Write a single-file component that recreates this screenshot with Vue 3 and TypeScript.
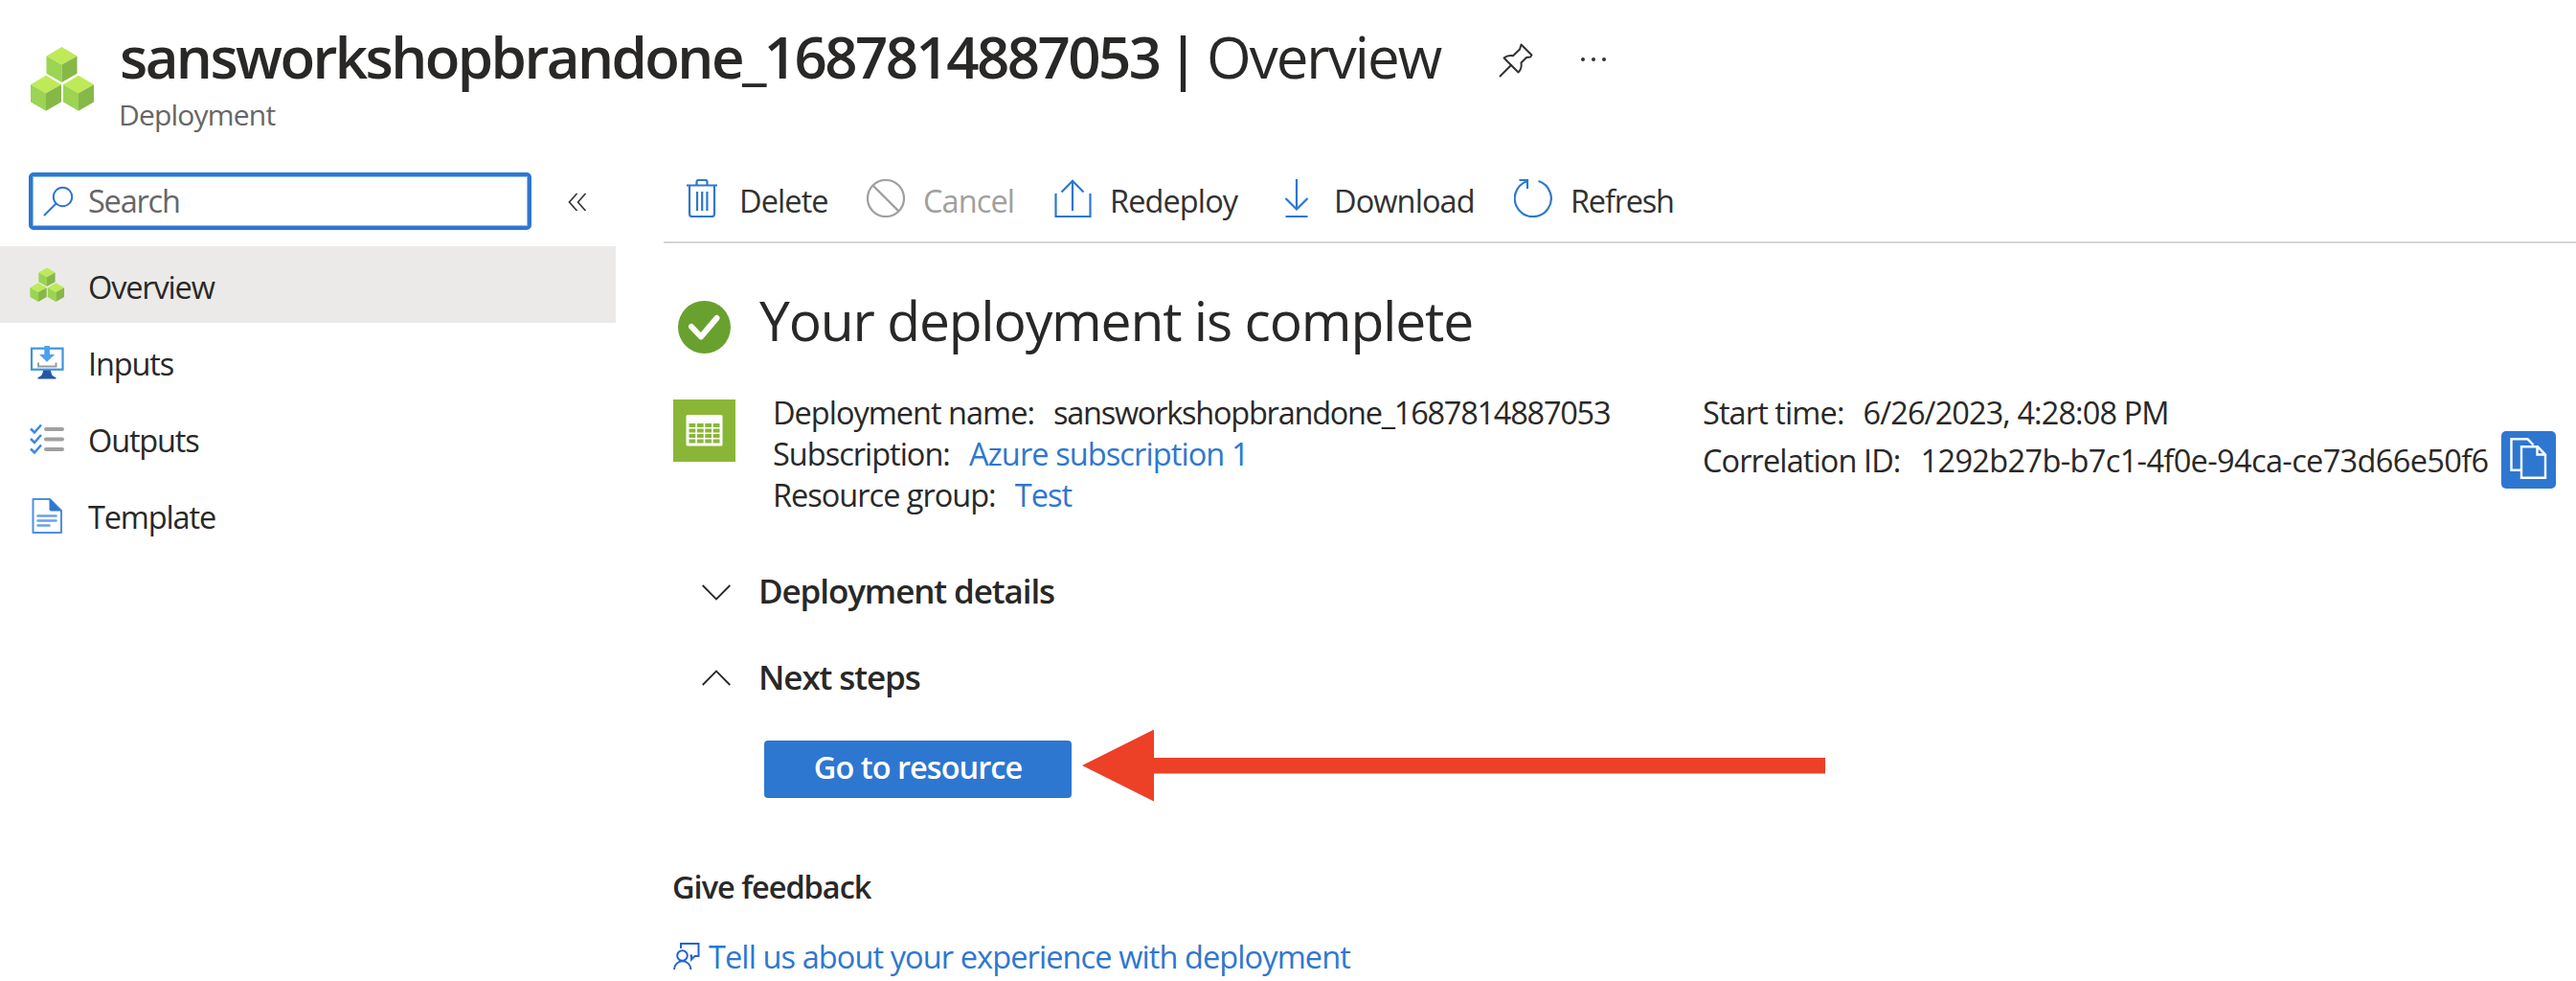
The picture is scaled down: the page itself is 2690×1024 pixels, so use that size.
<script setup lang="ts">
type CommandIcon = 'delete' | 'cancel' | 'redeploy' | 'download' | 'refresh'
type MenuIcon = 'cubes' | 'inputs' | 'outputs' | 'template'

interface Command {
  label: string
  icon: CommandIcon
  disabled?: boolean
}

interface MenuItem {
  label: string
  icon: MenuIcon
  active?: boolean
}

const deploymentName = 'sansworkshopbrandone_1687814887053'

const menu: MenuItem[] = [
  { label: 'Overview', icon: 'cubes', active: true },
  { label: 'Inputs', icon: 'inputs' },
  { label: 'Outputs', icon: 'outputs' },
  { label: 'Template', icon: 'template' },
]

const commands: Command[] = [
  { label: 'Delete', icon: 'delete' },
  { label: 'Cancel', icon: 'cancel', disabled: true },
  { label: 'Redeploy', icon: 'redeploy' },
  { label: 'Download', icon: 'download' },
  { label: 'Refresh', icon: 'refresh' },
]

/* Offsets of the three stacked cubes */
const cubes = [
  { x: 16.5, y: 0 },
  { x: 0, y: 29.8 },
  { x: 34, y: 29.8 },
]
</script>

<template>
  <div class="page">
    <header class="header">
      <svg class="header-icon" viewBox="0 0 66 67">
        <g v-for="(c, i) in cubes" :key="i" :transform="`translate(${c.x} ${c.y})`">
          <path d="M16 0 32 9.400 16 18.500 0 9.400Z" fill="#bfea58" />
          <path d="M0 9.400 16 18.500V37L0 27.800Z" fill="#9bd453" />
          <path d="M32 9.400 16 18.500V37L32 27.800Z" fill="#86b848" />
        </g>
      </svg>
      <div class="heading">
        <div class="title-row">
          <h1><b>{{ deploymentName }}</b><i class="pipe">|</i><span>Overview</span></h1>
          <svg class="pin" viewBox="0 0 36 36" fill="none" stroke="#323130" stroke-width="2" stroke-linejoin="round">
            <path d="M23.500 1.500 34.500 12.500 33 14.500 29 15 23.500 20.500C24.300 24.500 23.500 27.500 20.500 30.500L5.500 15.500C8.500 13 11.500 12.700 15 13.300L22 6.500Z" />
            <path d="M13 23 1.500 34.500" stroke-linecap="round" />
          </svg>
          <svg class="dots" viewBox="0 0 28 6" fill="#323130">
            <circle cx="3" cy="3" r="2" /><circle cx="14" cy="3" r="2" /><circle cx="25" cy="3" r="2" />
          </svg>
        </div>
        <p class="subtitle">Deployment</p>
      </div>
    </header>

    <div class="body">
      <aside class="sidebar">
        <div class="search-row">
          <div class="search">
            <svg viewBox="0 0 32 32" fill="none" stroke="#2e77d0" stroke-width="2">
              <circle cx="20.500" cy="11.500" r="9.700" />
              <path d="M13.500 18.500 1.500 30.500" stroke-linecap="round" />
            </svg>
            <span>Search</span>
          </div>
          <svg class="collapse" viewBox="0 0 20 20" fill="none" stroke="#323130" stroke-width="1.600">
            <path d="M9.500 1 1.500 10 9.500 19M18.500 1 10.500 10 18.500 19" />
          </svg>
        </div>
        <nav>
          <a v-for="item in menu" :key="item.label" class="nav-item" :class="{ active: item.active }">
            <svg v-if="item.icon === 'cubes'" viewBox="0 0 40 40">
              <g transform="translate(2.400 2.500) scale(.54 .53)">
                <g v-for="(c, i) in cubes" :key="i" :transform="`translate(${c.x} ${c.y})`">
                  <path d="M16 0 32 9.400 16 18.500 0 9.400Z" fill="#bfea58" />
                  <path d="M0 9.400 16 18.500V37L0 27.800Z" fill="#9bd453" />
                  <path d="M32 9.400 16 18.500V37L32 27.800Z" fill="#86b848" />
                </g>
              </g>
            </svg>
            <svg v-else-if="item.icon === 'inputs'" viewBox="0 0 40 40">
              <path d="M16 28h8c0 6 2 8 5.500 9v1.500h-19V37c3.500-1 5.500-3 5.500-9Z" fill="#2457a5" />
              <rect x="4" y="6.700" width="32.500" height="22" fill="#fff" stroke="#3f93db" stroke-width="2.200" />
              <path d="M11 21.500v4h18.500v-4" fill="none" stroke="#9c9c9c" stroke-width="2" />
              <path d="M17.300 4h5.600v9h5.300L20 20.800 12 13h5.300Z" fill="#4da0ec" />
            </svg>
            <svg v-else-if="item.icon === 'outputs'" viewBox="0 0 40 40" fill="none" stroke-linecap="round">
              <path d="M19 11h17M19 21.500h17M19 32h17" stroke="#a0a0a0" stroke-width="4" />
              <path d="M3 10.500 7 14.500 14 6.500M3 21 7 25 14 17M3 31.500 7 35.500 14 27.500" stroke="#3e86e0" stroke-width="2.500" stroke-linecap="butt" />
            </svg>
            <svg v-else viewBox="0 0 40 40">
              <path d="M5.500 4H23L35 16V39H5.500Z" fill="#fff" stroke="#4d8fe3" stroke-width="2" stroke-linejoin="round" />
              <path d="M22.500 3.500 35.500 16.500H24.500a2 2 0 0 1-2-2Z" fill="#2e77d0" />
              <path d="M10.500 21.500h19M10.500 26.500h19M10.500 31.500h12" stroke="#6ba0ea" stroke-width="2.600" stroke-linecap="round" />
            </svg>
            <span>{{ item.label }}</span>
          </a>
        </nav>
      </aside>

      <main class="main">
        <div class="toolbar">
          <button v-for="cmd in commands" :key="cmd.label" class="command" :class="[cmd.icon, { disabled: cmd.disabled }]">
            <svg v-if="cmd.icon === 'delete'" viewBox="0 0 40 40">
              <path d="M7 7V36.500a2.500 2.500 0 0 0 2.500 2.500H30.500a2.500 2.500 0 0 0 2.500-2.500V7" />
              <path d="M4 6.500H36M14.500 6V3a2 2 0 0 1 2-2h7a2 2 0 0 1 2 2V6M15 13V33M20.200 13V33M25.400 13V33" />
            </svg>
            <svg v-else-if="cmd.icon === 'cancel'" viewBox="0 0 40 40">
              <circle cx="20" cy="20" r="19" /><path d="M6.600 6.600 33.400 33.400" />
            </svg>
            <svg v-else-if="cmd.icon === 'redeploy'" viewBox="0 0 40 40">
              <path d="M2.500 15V39H38.500V15M20 33V1.500M8.500 13.500 20 1.800 31.500 13.500" />
            </svg>
            <svg v-else-if="cmd.icon === 'download'" viewBox="0 0 40 40">
              <path d="M20 0V31.500M8.500 20 20 31.500 31.500 20M8.500 39H31.500" />
            </svg>
            <svg v-else viewBox="0 0 40 40">
              <path d="M25.500 2A19 19 0 1 1 13.500 2.200M5.500 1H14V10" />
            </svg>
            <span>{{ cmd.label }}</span>
          </button>
        </div>

        <section class="status">
          <svg viewBox="0 0 55 55">
            <circle cx="27.500" cy="27.500" r="27.500" fill="#69a12f" />
            <path d="M14 27 24 37.500 40.500 18" fill="none" stroke="#fff" stroke-width="6" stroke-linecap="round" stroke-linejoin="round" />
          </svg>
          <h2>Your deployment is complete</h2>
        </section>

        <section class="essentials">
          <svg class="tile" viewBox="0 0 65 65">
            <rect width="65" height="65" fill="#8ab637" />
            <rect x="13.500" y="16" width="38" height="32.500" rx="1.500" fill="#fff" />
            <g stroke="#8ab637" stroke-width="4" stroke-dasharray="6.800 1.600">
              <path d="M16.500 27H48.500M16.500 32.500H48.500M16.500 38H48.500M16.500 43.500H48.500" />
            </g>
          </svg>
          <div class="col names">
            <div><span>Deployment name:</span><span class="dense">{{ deploymentName }}</span></div>
            <div><span>Subscription:</span><a>Azure subscription 1</a></div>
            <div><span>Resource group:</span><a>Test</a></div>
          </div>
          <div class="col">
            <div><span>Start time:</span><span>6/26/2023, 4:28:08 PM</span></div>
            <div class="correlation">
              <span>Correlation ID:</span><span class="guid">1292b27b-b7c1-4f0e-94ca-ce73d66e50f6</span>
              <button class="copy">
                <svg viewBox="0 0 57 60" fill="none" stroke="#fff" stroke-width="2.400">
                  <path d="M20 40.800H10.500V8.300H27.500L33.500 14.500" />
                  <path d="M21 16.300H38L46 24.500V48.800H21ZM37.500 16.500V24.500H46" />
                </svg>
              </button>
            </div>
          </div>
        </section>

        <h3 class="details">
          <svg viewBox="0 0 30 18"><path d="M.700 2 15 16.500 29.300 2" /></svg><span>Deployment details</span>
        </h3>
        <h3 class="next">
          <svg viewBox="0 0 30 18"><path d="M.700 17 15 2.500 29.300 17" /></svg><span>Next steps</span>
        </h3>

        <div class="action">
          <button class="primary">Go to resource</button>
          <svg class="arrow" viewBox="0 0 776 76">
            <path d="M0 38 75 .500V30H776V46.500H75V75.500Z" fill="#ec4027" />
          </svg>
        </div>

        <h4>Give feedback</h4>
        <a class="feedback">
          <svg viewBox="0 0 28 28" fill="none" stroke="#2561d6" stroke-width="2">
            <path d="M8 6V1H26.500V14H22.500L19 17.500V13.500H17.500" />
            <circle cx="9.500" cy="13.500" r="5.300" />
            <path d="M1 28A8.700 8.700 0 0 1 18.400 28" />
          </svg>
          <span>Tell us about your experience with deployment</span>
        </a>
      </main>
    </div>
  </div>
</template>

<style>
body {
  background: #fff;
  overflow: hidden;
}
</style>

<style scoped>
.page {
  width: 2690px;
  height: 1024px;
  overflow: hidden;
  background: #fff;
  color: #292827;
  font-family: "Open Sans", "Noto Sans", sans-serif;
  font-size: 32.5px;
  line-height: 43px;
  letter-spacing: -0.9px;
  white-space: nowrap;
}
h1, h2, h3, h4, p { margin: 0; }
svg { display: block; flex: none; }
button {
  border: 0;
  padding: 0;
  background: none;
  color: inherit;
  font: inherit;
  letter-spacing: inherit;
}

.header {
  display: flex;
  height: 160px;
  box-sizing: border-box;
  padding: 19px 0 0 32px;
}
.header-icon { width: 66px; height: 67px; margin-top: 30px; }
.heading { margin-left: 27px; }
.title-row { display: flex; height: 80px; }
h1 {
  display: flex;
  font-size: 60px;
  line-height: 80px;
  font-weight: 400;
  letter-spacing: -2px;
}
h1 b { font-weight: 600; letter-spacing: -2.57px; width: 1094px; }
.pipe { font-style: normal; font-weight: 600; width: 41px; }
.pin { width: 36px; height: 36px; margin: 26px 0 0 61px; }
.dots { width: 28px; height: 6px; margin: 40px 0 0 49px; }
.subtitle { font-size: 30px; line-height: 42px; color: #666; margin-left: -1px; letter-spacing: -0.8px; }

.body { display: flex; }
.sidebar { width: 643px; flex: none; padding-top: 20px; }
.search-row { display: flex; align-items: center; height: 60px; margin: 0 0 17px 30px; }
.search {
  display: flex;
  align-items: center;
  box-sizing: border-box;
  width: 525px;
  height: 60px;
  border: 4px solid #2e77d0;
  border-radius: 5px;
  box-shadow: inset 0 0 0 1px #8fbcec;
  padding-left: 11px;
  color: #666;
}
.search svg { width: 32px; height: 32px; }
.search span { margin: -2px 0 0 15px; letter-spacing: -1.2px; }
.collapse { width: 20px; height: 20px; margin-left: 38px; margin-top: 2px; }
.nav-item { display: flex; align-items: center; height: 80px; padding-left: 29px; letter-spacing: -1.15px; }
.nav-item svg { width: 40px; height: 40px; }
.nav-item span { margin: 5px 0 0 23px; }
.active { background: #ebeae8; }

.main { flex: 1; margin-left: 50px; }
.toolbar {
  display: flex;
  gap: 40px;
  height: 94px;
  box-sizing: border-box;
  border-bottom: 2px solid #d4d4d4;
  padding: 2px 0 0 20px;
}
.command { display: flex; align-items: center; gap: 19px; color: #323130; }
.command svg { width: 40px; height: 40px; fill: none; stroke: #2e77d0; stroke-width: 2.2; }
.command span { margin-top: 4px; }
.command.delete { width: 152px; }
.command.cancel { width: 155px; }
.command.redeploy { width: 194px; }
.command.download { width: 207px; }
.command.refresh { letter-spacing: -1.2px; }
.command.disabled { color: #a19f9d; }
.command.disabled svg { stroke: #a19f9d; }

.status { display: flex; height: 80px; margin: 40px 0 0 15px; }
.status svg { width: 55px; height: 55px; margin-top: 20px; }
h2 { font-size: 57px; line-height: 80px; font-weight: 400; letter-spacing: -1.2px; margin-left: 30px; }

.essentials { display: flex; margin: 35px 0 0 10px; height: 129px; }
.tile { width: 65px; height: 65px; margin-top: 8px; }
.col > div { display: flex; gap: 20px; }
.names { width: 971px; margin-left: 39px; }
.names span:first-child { letter-spacing: -1px; }
.dense { letter-spacing: -1.24px; }
.col > .correlation { align-items: center; height: 60px; margin-top: -2px; }
.guid { letter-spacing: -0.635px; margin-left: 1px; }
.copy { width: 57px; height: 60px; margin-left: -6px; border-radius: 5px; background: #2e77d0; }
.essentials a, .feedback { color: #2e77d0; }

h3 { display: flex; font-size: 35px; line-height: 48px; font-weight: 600; letter-spacing: -1.1px; margin-left: 40px; }
h3 svg { width: 30px; height: 18px; fill: none; stroke: #292827; stroke-width: 1.8; margin-top: 16px; }
h3 span { margin-left: 29px; }
.details { margin-top: 55px; }
.next { margin-top: 42px; }
.next svg { margin-top: 15px; }

.action { display: flex; height: 76px; margin: 30px 0 0 105px; }
.primary {
  width: 321px;
  height: 60px;
  margin-top: 12px;
  padding-bottom: 5px;
  border-radius: 4px;
  background: #2e77d0;
  color: #fff;
  font-weight: 600;
  letter-spacing: -0.97px;
}
.arrow { width: 776px; height: 76px; margin-left: 11px; }

h4 { font-size: 32.5px; line-height: 44px; font-weight: 600; letter-spacing: -1px; margin: 67px 0 0 9px; }
.feedback { display: flex; margin: 29px 0 0 10px; }
.feedback svg { width: 28px; height: 28px; margin-top: 7px; }
.feedback span { margin-left: 9px; }
</style>
